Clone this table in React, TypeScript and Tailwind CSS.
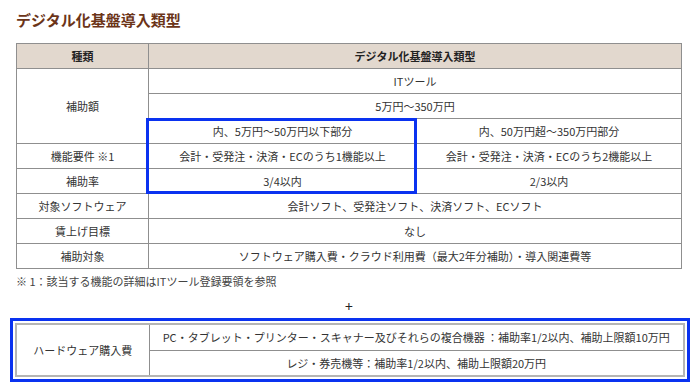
import React from 'react';

const cell = 'border border-[#8f8f8f] text-center align-middle px-2';

export default function App() {
  return (
    <div
      className="w-[700px] h-[390px] bg-white text-[#333] text-[11px] overflow-hidden"
      style={{ fontFamily: '"Noto Sans CJK JP", "Noto Sans", sans-serif' }}
    >
      <div className="pl-[16px] pr-[18px]">
        <h1 className="pt-[9px] h-[43px] text-[15px] font-bold text-[#6b3418] leading-[22px]">
          デジタル化基盤導入類型
        </h1>

        <div className="relative">
          <table className="w-[666px] border-collapse table-fixed">
            <colgroup>
              <col className="w-[132px]" />
              <col className="w-[268px]" />
              <col />
            </colgroup>
            <tbody>
              <tr className="h-[25px] bg-[#e2d8ce] font-bold text-[#222]">
                <td className={cell}>種類</td>
                <td className={cell} colSpan={2}>デジタル化基盤導入類型</td>
              </tr>
              <tr className="h-[25px]">
                <td className={cell} rowSpan={3}>補助額</td>
                <td className={cell} colSpan={2}>ITツール</td>
              </tr>
              <tr className="h-[25px]">
                <td className={cell} colSpan={2}>5万円〜350万円</td>
              </tr>
              <tr className="h-[25px]">
                <td className={cell}>内、5万円〜50万円以下部分</td>
                <td className={cell}>内、50万円超〜350万円部分</td>
              </tr>
              <tr className="h-[25px]">
                <td className={cell}>機能要件 ※1</td>
                <td className={cell}>会計・受発注・決済・ECのうち1機能以上</td>
                <td className={cell}>会計・受発注・決済・ECのうち2機能以上</td>
              </tr>
              <tr className="h-[25px]">
                <td className={cell}>補助率</td>
                <td className={cell}>3/4以内</td>
                <td className={cell}>2/3以内</td>
              </tr>
              <tr className="h-[25px]">
                <td className={cell}>対象ソフトウェア</td>
                <td className={cell} colSpan={2}>会計ソフト、受発注ソフト、決済ソフト、ECソフト</td>
              </tr>
              <tr className="h-[25px]">
                <td className={cell}>賃上げ目標</td>
                <td className={cell} colSpan={2}>なし</td>
              </tr>
              <tr className="h-[25px]">
                <td className={cell}>補助対象</td>
                <td className={cell} colSpan={2}>
                  ソフトウェア購入費・クラウド利用費（最大2年分補助）・導入関連費等
                </td>
              </tr>
            </tbody>
          </table>
          <div className="absolute left-[130px] top-[75px] w-[271px] h-[76px] border-[3px] border-[#0a32f0] pointer-events-none" />
        </div>

        <p className="mt-[4px] text-[11px] text-[#444] leading-[16px]">
          ※ 1：該当する機能の詳細はITツール登録要領を参照
        </p>

        <div className="h-[29px] pt-[6px] flex items-center justify-center text-[14px] text-[#222]">
          +
        </div>
      </div>

      <div className="ml-[10px] w-[680px] border-[3px] border-[#0a32f0] p-[2px]">
        <table className="w-full border-collapse table-fixed border-2 border-[#b5b5b5]">
          <colgroup>
            <col className="w-[133px]" />
            <col />
          </colgroup>
          <tbody>
            <tr className="h-[26px]">
              <td className={cell} rowSpan={2}>ハードウェア購入費</td>
              <td className={cell}>
                PC・タブレット・プリンター・スキャナー及びそれらの複合機器 ：補助率1/2以内、補助上限額10万円
              </td>
            </tr>
            <tr className="h-[26px]">
              <td className={cell}>レジ・券売機等：補助率1/2以内、補助上限額20万円</td>
            </tr>
          </tbody>
        </table>
      </div>
    </div>
  );
}
